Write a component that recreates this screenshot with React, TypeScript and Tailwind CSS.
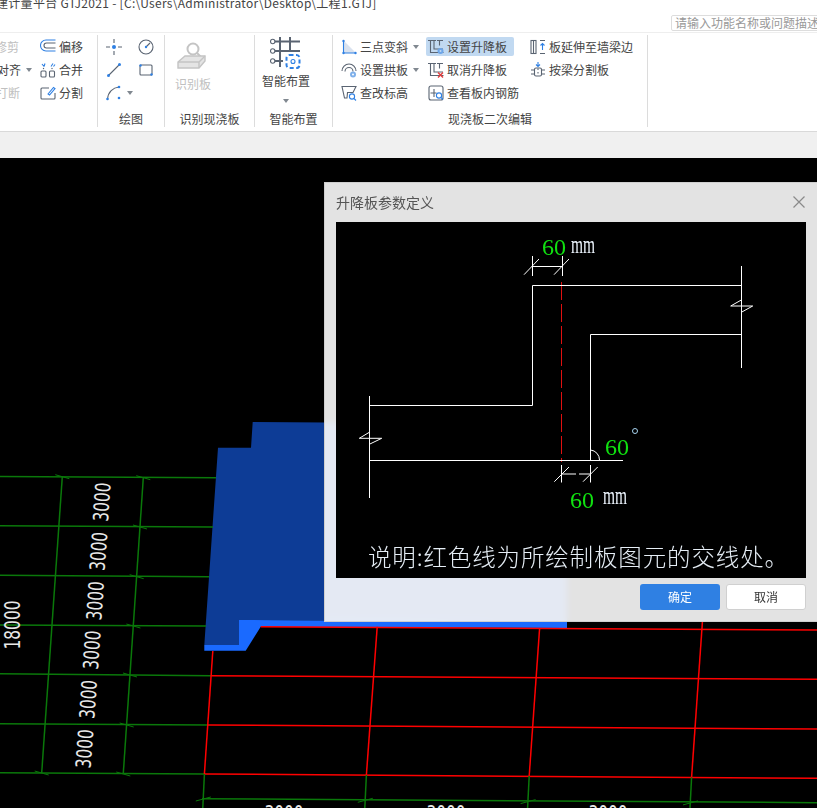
import { ReactNode } from "react";

const DARK = "#5a6472";
const BLUE = "#2f80e3";
const GRAY = "#c4c4c4";

function Ico({ children, w = 16, h = 16 }: { children: ReactNode; w?: number; h?: number }) {
  return (
    <svg width={w} height={h} viewBox={`0 0 ${w} ${h}`} fill="none" strokeWidth="1.1" className="shrink-0">
      {children}
    </svg>
  );
}

function Caret() {
  return <span className="ml-[5px] h-0 w-0 border-x-[3.5px] border-t-[4px] border-x-transparent border-t-[#808890]" />;
}

const StepPath = (
  <path d="M0 1.500h8M2.500 1.500v12h13M6 1.500v8.500h9M9 1.500h6M11.500 1.500v5" stroke={DARK} />
);

const icons: Record<string, ReactNode> = {
  offset: (
    <Ico>
      <path d="M15.500 1H6a5 5 0 0 0 0 11h9.500" stroke={BLUE} />
      <path d="M15.500 4H6.500a2.500 2.500 0 0 0 0 5h9" stroke={DARK} />
    </Ico>
  ),
  merge: (
    <Ico>
      <path d="M2 2l2 2.500M5 1.500l-1 3M11 4.500l2-3M13.500 4.500l1.500-2" stroke={BLUE} />
      <rect x="1" y="9" width="5" height="6" rx="1" stroke={DARK} />
      <rect x="9.500" y="9" width="5" height="6" rx="1" stroke={DARK} />
      <circle cx="3.500" cy="6.500" r=".7" fill={DARK} />
      <circle cx="12" cy="6.500" r=".7" fill={DARK} />
    </Ico>
  ),
  split: (
    <Ico>
      <path d="M9 3H2a1 1 0 0 0-1 1v9a1 1 0 0 0 1 1h12a1 1 0 0 0 1-1V8" stroke={DARK} />
      <path d="M8 9l5.500-6.500 1.500 1L9.500 10z" stroke={BLUE} />
    </Ico>
  ),
  point: (
    <Ico>
      <path d="M0 8h4M12 8h4M8 0v4M8 12v4" stroke={DARK} />
      <circle cx="8" cy="8" r="2" fill={BLUE} />
    </Ico>
  ),
  circle: (
    <Ico>
      <circle cx="8" cy="8" r="7" stroke={DARK} />
      <path d="M8 8l4-4" stroke={DARK} />
      <circle cx="8" cy="8" r="1.200" fill={BLUE} />
    </Ico>
  ),
  line: (
    <Ico>
      <path d="M2.500 13.500L13.500 2.500" stroke={DARK} />
      <circle cx="2.500" cy="13.500" r="1.500" fill={BLUE} />
      <circle cx="13.500" cy="2.500" r="1.500" fill={BLUE} />
    </Ico>
  ),
  rect: (
    <Ico>
      <rect x="2" y="3" width="12" height="10" rx="1" stroke={DARK} />
      <circle cx="2.500" cy="3.500" r="1.200" fill={BLUE} />
      <circle cx="13.500" cy="12.500" r="1.200" fill={BLUE} />
    </Ico>
  ),
  arc: (
    <Ico>
      <path d="M1.500 14C2 7 7 2.500 13 2" stroke={DARK} />
      <circle cx="1.500" cy="14" r="1.300" fill={BLUE} />
      <circle cx="13" cy="2" r="1.300" fill={BLUE} />
      <circle cx="13" cy="13" r="1.300" fill={BLUE} />
    </Ico>
  ),
  slope: (
    <Ico>
      <path d="M3 2l12 12H3z" fill="#d9e2ef" />
      <path d="M2.500 2v12h12" stroke={BLUE} />
      <circle cx="2.500" cy="2" r="1.200" fill={BLUE} />
      <circle cx="2.500" cy="14" r="1.200" fill={BLUE} />
      <circle cx="14.500" cy="14" r="1.200" fill={BLUE} />
    </Ico>
  ),
  arch: (
    <Ico>
      <path d="M1 9a7 7 0 0 1 14 0" stroke={DARK} />
      <path d="M4 9.500a4 4 0 0 1 8 0" stroke={DARK} />
      <circle cx="12" cy="12.500" r="3" fill="#7fb0ea" />
      <circle cx="12" cy="12.500" r="1" fill="#fff" />
    </Ico>
  ),
  raise: (
    <Ico>
      {StepPath}
      <circle cx="12.500" cy="12" r="3" fill="#6ea6e8" />
      <circle cx="12.500" cy="12" r="1" fill="#c1d9f1" />
    </Ico>
  ),
  cancel: (
    <Ico>
      {StepPath}
      <path d="M10 10.500l5 5M15 10.500l-5 5" stroke="#e23b3b" strokeWidth="1.400" />
    </Ico>
  ),
  level: (
    <Ico>
      <path d="M1 1.500h14l-3 6H6.500L6 13H3.500z" stroke={DARK} />
      <circle cx="11" cy="11.500" r="2.600" fill="#fff" stroke={BLUE} />
      <path d="M13 13.500l2 2" stroke={BLUE} />
    </Ico>
  ),
  rebar: (
    <Ico>
      <rect x="1" y="1" width="14" height="14" rx="2" stroke={DARK} />
      <path d="M6 4v8M2.500 8h6" stroke={DARK} />
      <circle cx="11" cy="10.500" r="2.600" fill="#fff" stroke={BLUE} />
      <path d="M13 12.500l2 2" stroke={BLUE} />
    </Ico>
  ),
  extend: (
    <Ico>
      <rect x="1" y="1.500" width="5" height="13" stroke={DARK} />
      <path d="M3.500 1.500v13" stroke={DARK} />
      <path d="M10 1.500h5M10 14.500h5" stroke={DARK} />
      <path d="M12.500 11V4.500M10.500 6.500l2-2 2 2" stroke={BLUE} />
    </Ico>
  ),
  beamSplit: (
    <Ico>
      <path d="M8 0v4M6 2.500L8 4.500l2-2" stroke={BLUE} />
      <path d="M1 8h3M12 8h3M1 12h3M12 12h3" stroke={DARK} />
      <rect x="4.500" y="6" width="7" height="8" rx="1.500" stroke={DARK} />
      <path d="M8 6.500v1.500M8 10v1.500" stroke={DARK} />
    </Ico>
  ),
};

function Tool({ icon, label, caret, disabled, active }: { icon?: ReactNode; label: string; caret?: boolean; disabled?: boolean; active?: boolean }) {
  return (
    <div className={`flex h-[23px] items-center whitespace-nowrap ${disabled ? "text-[#c0c0c0]" : "text-[#444]"}`}>
      <div className={`flex h-[19px] items-center gap-[3px] rounded-[2px] ${active ? "w-[88px] bg-[#c1d9f1] pl-[2px]" : ""}`}>
        {icon}
        <span>{label}</span>
      </div>
      {caret && <Caret />}
    </div>
  );
}

function Group({ width, label, children }: { width: string; label: string; children: ReactNode }) {
  return (
    <div className={`flex h-[92px] shrink-0 flex-col border-r border-[#dcdcdc] ${width}`}>
      <div className="h-[76px] overflow-hidden">{children}</div>
      <div className="h-4 text-center text-xs leading-4 text-[#444]">{label}</div>
    </div>
  );
}

function Ribbon() {
  return (
    <div className="flex h-[99px] border-b border-[#d9d9d9] bg-white pt-[2px] text-xs">
      <Group width="w-[98px]" label="">
        <div className="flex">
          <div className="-ml-[5px] w-[45px]">
            <Tool label="修剪" disabled />
            <div className="ml-[2px]"><Tool label="对齐" caret /></div>
            <div className="ml-[1px]"><Tool label="打断" disabled /></div>
          </div>
          <div>
            <Tool icon={icons.offset} label="偏移" />
            <Tool icon={icons.merge} label="合并" />
            <Tool icon={icons.split} label="分割" />
          </div>
        </div>
      </Group>
      <Group width="w-[67px]" label="绘图">
        <div className="grid grid-cols-[32px_32px] pl-2">
          <div className="flex h-[23px] items-center">{icons.point}</div>
          <div className="flex h-[23px] items-center">{icons.circle}</div>
          <div className="flex h-[23px] items-center">{icons.line}</div>
          <div className="flex h-[23px] items-center">{icons.rect}</div>
          <div className="flex h-[23px] items-center">{icons.arc}<Caret /></div>
        </div>
      </Group>
      <Group width="w-[90px]" label="识别现浇板">
        <div className="flex flex-col items-start pl-[10px] pt-[7px] text-[#c0c0c0]">
          <div className="ml-[2px]">
            <Ico w={30} h={28}>
              <circle cx="16" cy="7" r="5.500" stroke={GRAY} strokeWidth="2" />
              <path d="M20 11l4 4" stroke={GRAY} strokeWidth="2" />
              <path d="M1 20l7-6h20v5l-6 7H1z" fill="#e4e4e4" stroke={GRAY} strokeWidth="1.400" />
              <path d="M1 20h21l6-6M22 20v6" stroke={GRAY} strokeWidth="1.400" />
            </Ico>
          </div>
          <span className="mt-[6px]">识别板</span>
        </div>
      </Group>
      <Group width="w-[78px]" label="智能布置">
        <div className="flex flex-col items-start pl-[7px] pt-[2px] text-[#444]">
          <div className="ml-[8px]">
            <Ico w={32} h={32}>
              <path d="M3 4.500h27M3 14h27M3 24h10M10 0v30M20 0v14" stroke={DARK} strokeWidth="2" />
              <circle cx="2.700" cy="4.500" r="2.200" fill="#fff" stroke={DARK} />
              <circle cx="2.700" cy="14" r="2.200" fill="#fff" stroke={DARK} />
              <circle cx="2.700" cy="24" r="2.200" fill="#fff" stroke={DARK} />
              <rect x="16.500" y="18" width="13" height="13" rx="3" fill="#fff" stroke={BLUE} strokeWidth="2" strokeDasharray="4 2.500" />
              <circle cx="23" cy="24.500" r="2" stroke={BLUE} />
            </Ico>
          </div>
          <span className="mt-[4px]">智能布置</span>
          <span className="ml-[16px] mt-[10px] flex"><Caret /></span>
        </div>
      </Group>
      <Group width="w-[315px]" label="现浇板二次编辑">
        <div className="flex pl-[8px]">
          <div className="w-[85px]">
            <Tool icon={icons.slope} label="三点变斜" caret />
            <Tool icon={icons.arch} label="设置拱板" caret />
            <Tool icon={icons.level} label="查改标高" />
          </div>
          <div className="w-[104px]">
            <Tool icon={icons.raise} label="设置升降板" active />
            <div className="pl-[2px]"><Tool icon={icons.cancel} label="取消升降板" /></div>
            <div className="pl-[2px]"><Tool icon={icons.rebar} label="查看板内钢筋" /></div>
          </div>
          <div>
            <Tool icon={icons.extend} label="板延伸至墙梁边" />
            <Tool icon={icons.beamSplit} label="按梁分割板" />
          </div>
        </div>
      </Group>
    </div>
  );
}

const xH = [
  [0, 476.5, 216, 477.7],
  [0, 525.7, 213, 527],
  [0, 575.3, 209, 576.7],
  [0, 625, 206, 626],
  [0, 673.7, 211, 675.7],
  [0, 723.7, 208, 725],
  [0, 772.7, 204.4, 774],
];
const bTicks = [
  [143.3, 477.7], [140, 527], [136.7, 576.7], [133.4, 626], [130, 675], [126.7, 725], [123.3, 774],
];
const redH = [
  [260.7, 626.7, 817, 630],
  [211, 675.7, 817, 679.3],
  [208, 725, 817, 729],
  [204.4, 774, 817, 778.3],
];
const redV = [
  [212.8, 651, 204.4, 774],
  [377.2, 626.7, 366.4, 775],
  [539.6, 628.3, 529.2, 776],
  [702.4, 622, 691.6, 777.3],
];
const lowV = [
  [204.4, 774, 202.8, 808],
  [366.4, 775, 364.8, 808],
  [529.2, 776, 527.6, 808],
  [691.6, 777.3, 690, 808],
];
const spans = [
  [101.3, 502], [98, 551.3], [94.7, 600.7], [91.3, 650], [87.7, 699.3], [84, 748.7],
];

function Model() {
  const green = "#0a780a";
  return (
    <svg viewBox="0 158 817 650" className="absolute inset-0 h-full w-full" fill="none">
      <polygon points="252.700,422 567,424 567,622 239,620 239,645 204.300,645 218,447.700 251,447.700" fill="#0d3c96" />
      <polygon points="239,620 567,622 567,628 260.700,626.700 245.700,650.700 204.300,650.700 204.300,645 239,645" fill="#1a6aff" />
      {xH.map(([a, b, c, d], i) => (
        <line key={i} x1={a} y1={b} x2={c} y2={d} stroke={green} strokeWidth="1.500" />
      ))}
      <line x1="62.300" y1="476.700" x2="41.700" y2="773" stroke={green} strokeWidth="1.500" />
      <line x1="143.300" y1="477.700" x2="123.300" y2="773.300" stroke={green} strokeWidth="1.500" />
      {bTicks.map(([x, y], i) => (
        <line key={i} x1={x - 7} y1={y - 2} x2={x + 7} y2={y + 2} stroke={green} />
      ))}
      <line x1="55.300" y1="474.700" x2="69.300" y2="478.700" stroke={green} />
      <line x1="34.700" y1="771" x2="48.700" y2="775" stroke={green} />
      {redH.map(([a, b, c, d], i) => (
        <line key={i} x1={a} y1={b} x2={c} y2={d} stroke="#f00" strokeWidth="1.500" />
      ))}
      {redV.map(([a, b, c, d], i) => (
        <line key={i} x1={a} y1={b} x2={c} y2={d} stroke="#f00" strokeWidth="1.500" />
      ))}
      {lowV.map(([a, b, c, d], i) => (
        <g key={i}>
          <line x1={a} y1={b} x2={c} y2={d} stroke={green} strokeWidth="1.500" />
          <line x1={c - 7} y1={801 + i * 1.300} x2={c + 8} y2={797 + i * 1.300} stroke={green} />
        </g>
      ))}
      <line x1="202" y1="798.700" x2="817" y2="802.700" stroke={green} strokeWidth="1.500" />
      {spans.map(([x, y], i) => (
        <text key={i} transform={`translate(${x} ${y}) rotate(-86)`} x="0" y="8" textAnchor="middle" textLength="39" lengthAdjust="spacingAndGlyphs" fontFamily="'DejaVu Sans', sans-serif" fontSize="21" fill="#e8e8e8">3000</text>
      ))}
      <text transform="translate(11.700 625) rotate(-90)" x="0" y="8" textAnchor="middle" textLength="49" lengthAdjust="spacingAndGlyphs" fontFamily="'DejaVu Sans', sans-serif" fontSize="21" fill="#e8e8e8">18000</text>
      {[284, 446, 608].map((x) => (
        <text key={x} x={x} y="820.500" textAnchor="middle" textLength="39" lengthAdjust="spacingAndGlyphs" fontFamily="'DejaVu Sans', sans-serif" fontSize="21" fill="#e8e8e8">3000</text>
      ))}
    </svg>
  );
}

function SlabDiagram() {
  const sans = "'Noto Sans CJK SC', sans-serif";
  const serif = "'Liberation Serif', serif";
  return (
    <svg viewBox="336 222 470 356" className="block h-full w-full" fill="none" stroke="#fff">
      <line x1="561.500" y1="282" x2="561.500" y2="462" stroke="#e01010" strokeDasharray="18 4" />
      <path d="M742 285.500H532.500V405.500H369.500" />
      <path d="M369.500 396V498M369.500 460.500H623M590.500 460.500V334.500H741.500M741.500 266V368" />
      <path d="M741.300 300L730.700 306H752.700L741.300 312.300M369.300 432.300L359.300 438.300H381.700L369.300 444.300" />
      <path d="M532.500 256V276M562.500 256V276M532.500 266.500H562.500M524 274.700L539 259M554 274.700L569 259" />
      <path d="M561.500 465V482.500M590.500 465V482.500M561.500 474H576M579 474H590.500M554.300 481.700L569 467M583 481.700L597.700 467" />
      <path d="M590.500 450A10 10 0 0 1 599.500 460" />
      <circle cx="635" cy="431" r="2.500" stroke="#a8d4f0" />
      <g stroke="none" fontFamily={serif}>
        <text x="542" y="255" fontSize="24" fill="#10e010">60</text>
        <text x="571" y="253" fontSize="26" textLength="24" lengthAdjust="spacingAndGlyphs" fill="#eef6ff">mm</text>
        <text x="605" y="455" fontSize="24" fill="#10e010">60</text>
        <text x="570" y="508" fontSize="24" fill="#10e010">60</text>
        <text x="603" y="504" fontSize="26" textLength="24" lengthAdjust="spacingAndGlyphs" fill="#eef6ff">mm</text>
        <text x="368" y="566" textLength="420" fontFamily={sans} fontWeight="300" fontSize="23.500" fill="#e6eef6">说明:红色线为所绘制板图元的交线处。</text>
      </g>
    </svg>
  );
}

function Dialog() {
  return (
    <div className="absolute left-[324px] top-[24px] flex h-[440px] w-[493px] flex-col border-l border-t border-b border-[#cfcfcf] bg-white/[.89] backdrop-blur-[3px]">
      <div className="flex h-[39px] shrink-0 items-center justify-between pl-[11px] pr-[12px] pb-[2px]">
        <span className="text-sm text-[#555]">升降板参数定义</span>
        <svg width="12" height="12" viewBox="0 0 12 12" stroke="#8a8a8a" strokeWidth="1.200"><path d="M.5.5l11 11M11.500.5l-11 11" /></svg>
      </div>
      <div className="ml-[11px] h-[356px] w-[470px] shrink-0 bg-black">
        <SlabDiagram />
      </div>
      <div className="mr-[11px] mt-[6px] flex justify-end gap-[6px] text-xs">
        <button className="h-[26px] w-20 rounded-[3px] bg-[#2f80e3] text-white">确定</button>
        <button className="h-[26px] w-20 rounded-[3px] border border-[#d0d0d0] bg-white text-[#333]">取消</button>
      </div>
    </div>
  );
}

export default function App() {
  return (
    <div className="flex h-[808px] w-[817px] flex-col overflow-hidden bg-white font-['Noto_Sans_CJK_SC',sans-serif]">
      <div className="h-[33px] shrink-0 overflow-hidden border-b border-[#eeeeee]">
        <div className="-ml-[4px] -mt-[5px] h-4 whitespace-nowrap text-xs leading-4 tracking-[.3px] text-[#444]">建计量平台 GTJ2021 - [C:\Users\Administrator\Desktop\工程1.GTJ]</div>
        <div className="ml-[671px] mt-[4px] h-4 w-[160px] rounded-[2px] border border-[#dddddd] pl-[3px] text-xs leading-[14px] whitespace-nowrap text-[#999]">请输入功能名称或问题描述</div>
      </div>
      <Ribbon />
      <div className="h-[26px] shrink-0 bg-[#f0f0f0]" />
      <div className="relative flex-1 bg-black">
        <Model />
        <Dialog />
      </div>
    </div>
  );
}
